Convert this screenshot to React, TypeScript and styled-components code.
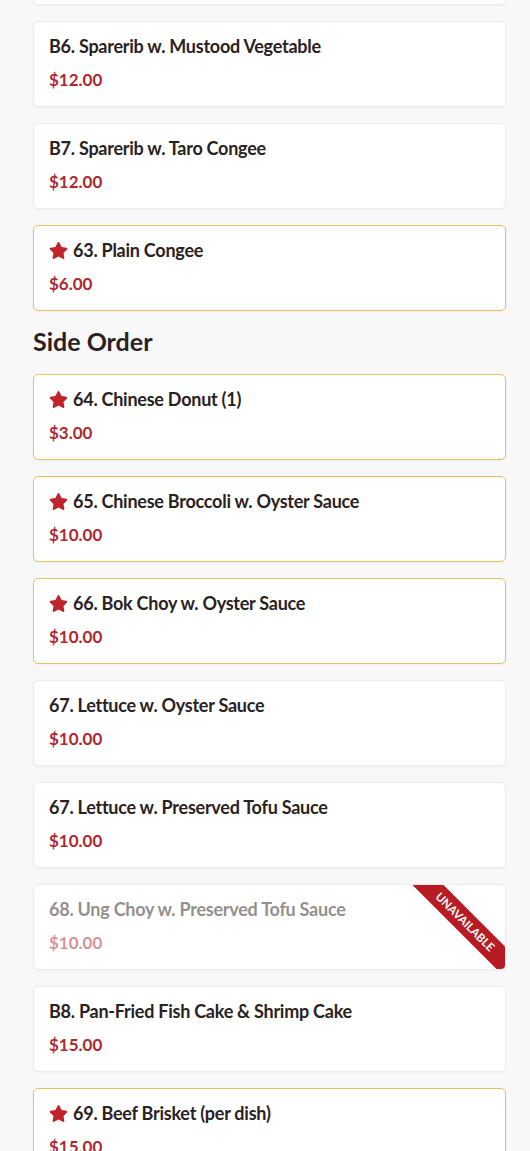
import React from 'react';
import styled, { createGlobalStyle } from 'styled-components';
import { FaStar } from 'react-icons/fa';

type Item = {
    name: string;
    price: string;
    featured?: boolean;
    unavailable?: boolean;
};

const topItems: Item[] = [
    { name: 'B6. Sparerib w. Mustood Vegetable', price: '$12.00' },
    { name: 'B7. Sparerib w. Taro Congee', price: '$12.00' },
    { name: '63. Plain Congee', price: '$6.00', featured: true },
];

const sideItems: Item[] = [
    { name: '64. Chinese Donut (1)', price: '$3.00', featured: true },
    { name: '65. Chinese Broccoli w. Oyster Sauce', price: '$10.00', featured: true },
    { name: '66. Bok Choy w. Oyster Sauce', price: '$10.00', featured: true },
    { name: '67. Lettuce w. Oyster Sauce', price: '$10.00' },
    { name: '67. Lettuce w. Preserved Tofu Sauce', price: '$10.00' },
    { name: '68. Ung Choy w. Preserved Tofu Sauce', price: '$10.00', unavailable: true },
    { name: 'B8. Pan-Fried Fish Cake & Shrimp Cake', price: '$15.00' },
    { name: '69. Beef Brisket (per dish)', price: '$15.00', featured: true },
];

const MenuCard: React.FC<{ item: Item }> = ({ item }) => (
    <Card $featured={item.featured}>
        <CardBody $dim={item.unavailable}>
            <Title>
                {item.featured && <StarIcon />}
                {item.name}
            </Title>
            <Price>{item.price}</Price>
        </CardBody>
        {item.unavailable && <Ribbon>UNAVAILABLE</Ribbon>}
    </Card>
);

const App: React.FC = () => {
    return (
        <Page>
            <GlobalStyle />
            <PeekCard />
            <List>
                {topItems.map((it) => <MenuCard key={it.name} item={it} />)}
            </List>
            <Section>Side Order</Section>
            <List>
                {sideItems.map((it) => <MenuCard key={it.name} item={it} />)}
            </List>
        </Page>
    );
};

const GlobalStyle = createGlobalStyle`
html, body {
    margin: 0;
    padding: 0;
    background: #f8f8f8;
    font-family: "Lato", "Noto Sans", sans-serif;
    color: #2a2222;
}
`

const Page = styled.div`
height: 1151px;
overflow: hidden;
padding: 0 24px 0 33px;
display: flex;
flex-direction: column;
`

const PeekCard = styled.div`
box-sizing: border-box;
margin-top: -79px;
height: 84px;
background: #fff;
border: 1px solid #ececec;
border-radius: 5px;
box-shadow: 0 1px 2px rgba(0,0,0,0.04);
margin-bottom: 16px;
flex-shrink: 0;
`

const List = styled.div`
display: flex;
flex-direction: column;
gap: 16px;
`

const Card = styled.div<{ $featured?: boolean }>`
position: relative;
overflow: hidden;
height: 86px;
box-sizing: border-box;
background: #fff;
border: 1px solid ${p => p.$featured ? '#e3c25f' : '#ececec'};
border-radius: 5px;
box-shadow: 0 1px 2px rgba(0,0,0,0.04);
flex-shrink: 0;
`

const CardBody = styled.div<{ $dim?: boolean }>`
padding: 12px 15px 0;
opacity: ${p => p.$dim ? 0.5 : 1};
`

const Title = styled.div`
display: flex;
align-items: center;
gap: 5px;
font-size: 18px;
font-weight: 700;
line-height: 24px;
letter-spacing: -0.25px;
color: #2a2222;
`

const StarIcon = styled(FaStar)`
width: 19px;
height: 19px;
color: #c1232b;
`

const Price = styled.div`
margin-top: 12px;
font-size: 17px;
font-weight: 700;
line-height: 20px;
color: #b1282f;
`

const Section = styled.h2`
margin: 15px 0 18px;
font-size: 25px;
font-weight: 700;
line-height: 30px;
color: #2a2222;
`

const Ribbon = styled.div`
position: absolute;
top: 26px;
right: -35px;
width: 150px;
height: 22px;
line-height: 22px;
background: #b71c24;
color: #fff;
font-size: 11.5px;
font-weight: 700;
text-align: center;
transform: rotate(45deg);
`

export default App;
